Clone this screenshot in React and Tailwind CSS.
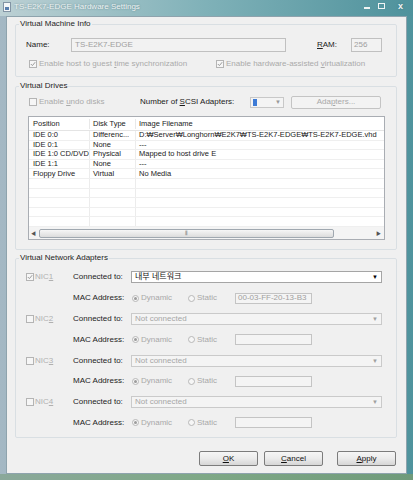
import React from 'react';

const rows = [
  ['IDE 0:0', 'Differenc...', 'D:₩Server₩Longhorn₩E2K7₩TS-E2K7-EDGE₩TS-E2K7-EDGE.vhd'],
  ['IDE 0:1', 'None', '---'],
  ['IDE 1:0 CD/DVD', 'Physical', 'Mapped to host drive E'],
  ['IDE 1:1', 'None', '---'],
  ['Floppy Drive', 'Virtual', 'No Media'],
  ['', '', ''],
  ['', '', ''],
  ['', '', ''],
  ['', '', ''],
  ['', '', ''],
];

function Check({ checked }) {
  return (
    <span className="w-[8px] h-[8px] border border-[#b4b4b4] bg-[#f6f6f6] flex items-center justify-center shrink-0">
      {checked && (
        <svg width="6" height="6" viewBox="0 0 6 6">
          <path d="M0.8 3 L2.4 4.6 L5.2 1.2" fill="none" stroke="#9a9a9a" strokeWidth="1" />
        </svg>
      )}
    </span>
  );
}

function Radio({ on }) {
  return (
    <span className="w-[7px] h-[7px] rounded-full border border-[#b8b8b8] bg-[#f6f6f6] flex items-center justify-center shrink-0">
      {on && <span className="w-[3px] h-[3px] rounded-full bg-[#9c9c9c]" />}
    </span>
  );
}

function Select({ active, text }) {
  return (
    <div
      className={`w-[251px] h-[12px] flex items-center justify-between px-[3px] border ${
        active ? 'bg-white border-[#a5a5a5] text-[#111]' : 'bg-[#f4f4f4] border-[#cacaca] text-[#a6a6a6]'
      }`}
    >
      <span>{text}</span>
      <span className={`text-[6px] ${active ? 'text-black' : 'text-[#a0a0a0]'}`}>▼</span>
    </div>
  );
}

function NicRows({ n, active, connected, mac, checked }) {
  return (
    <>
      <div className="h-[20.8px] flex items-center pl-[10px]">
        <div className="w-[47px] flex items-center gap-[1px] text-[#b0b0b0]">
          <Check checked={checked} />
          <span>
            NIC<span className="underline">{n}</span>
          </span>
        </div>
        <span className="w-[58px] text-[#222]">Connected to:</span>
        <Select active={active} text={connected} />
      </div>
      <div className="h-[20.8px] flex items-center pl-[57px]">
        <span className="w-[59px] text-[#222]">MAC Address:</span>
        <div className="w-[56px] flex items-center gap-[2px] text-[#a8a8a8]">
          <Radio on />
          <span>Dynamic</span>
        </div>
        <div className="w-[47px] flex items-center gap-[2px] text-[#a8a8a8]">
          <Radio />
          <span>Static</span>
        </div>
        <div className="w-[77px] h-[11px] border border-[#c4c4c4] bg-[#f4f4f4] text-[#a0a0a0] pl-[2px] flex items-center">
          {mac}
        </div>
      </div>
    </>
  );
}

function Group({ title, h, children }) {
  return (
    <fieldset className={`border border-[#d9dfe3] rounded-[2px] w-[382px] ${h}`}>
      <legend className="ml-[3px] px-[1px] leading-[10px] text-[#1e1e1e]">{title}</legend>
      {children}
    </fieldset>
  );
}

function Button({ first, rest }) {
  return (
    <button className="w-[59px] h-[15px] border border-[#7c7c7c] rounded-[2px] bg-gradient-to-b from-[#f6f6f6] via-[#ebebeb] to-[#d6d6d6] text-[#111] flex items-center justify-center">
      <span>
        <span className="underline">{first}</span>
        {rest}
      </span>
    </button>
  );
}

export default function App() {
  return (
    <div className="w-[413px] h-[480px] flex flex-col overflow-hidden bg-gradient-to-r from-[#a4b8c4] via-[#79aab2] to-[#4f939d] font-['Liberation_Sans','Noto_Sans_CJK_KR',sans-serif] text-[8px] leading-[10px]">
      {/* title bar */}
      <div className="h-[16px] flex items-start justify-between bg-gradient-to-r from-[#bcd0d4] via-[#7fb1b8] to-[#4e929c]">
        <div className="flex items-center gap-[3px] pl-[3px] pt-[2px]">
          <svg width="8" height="10" viewBox="0 0 8 10">
            <rect x="0.5" y="0.5" width="7" height="9" fill="#f4f6f8" stroke="#8294a4" />
            <rect x="2" y="5" width="4" height="3" fill="#5a7fae" />
          </svg>
          <span className="text-[#eef4f4] [text-shadow:0_0_2px_#5f8188]">TS-E2K7-EDGE Hardware Settings</span>
        </div>
        <div className="flex items-center gap-[8px] pr-[10px] pt-[1px] text-[#f2f6f6] [text-shadow:0_0_2px_#3f6f76]">
          <span className="w-[6px] h-[2px] bg-[#f0f4f4] mt-[4px]" />
          <span className="w-[7px] h-[6px] border-[1.5px] border-[#f0f4f4]" />
          <span className="text-[9px] font-bold ml-[5px]">x</span>
        </div>
      </div>

      {/* client */}
      <div className="flex-1 ml-[6px] mr-[6px] border border-[#8ea3ad] bg-[#f0f0f0] flex flex-col pl-[8px] pt-[2px]">
        <Group title="Virtual Machine Info" h="h-[58px]">
          <div className="h-[14px] mt-[9px] flex items-center pl-[10px]">
            <span className="w-[45px] text-[#222]">Name:</span>
            <div className="w-[215px] h-[14px] border border-[#c0c0c0] bg-[#f2f2f2] text-[#a0a0a0] pl-[3px] flex items-center">
              TS-E2K7-EDGE
            </div>
            <span className="ml-[31px] w-[34px] text-[#222]">
              <span className="underline">R</span>AM:
            </span>
            <div className="w-[31px] h-[14px] border border-[#c0c0c0] bg-[#f2f2f2] text-[#a0a0a0] pl-[2px] flex items-center">
              256
            </div>
          </div>
          <div className="h-[10px] mt-[7px] flex items-center pl-[13px] text-[#aaa]">
            <div className="w-[187px] flex items-center gap-[2px]">
              <Check checked />
              <span>
                Enable host to guest <span className="underline">t</span>ime synchronization
              </span>
            </div>
            <div className="flex items-center gap-[2px]">
              <Check checked />
              <span>
                Enable hardware-assisted <span className="underline">v</span>irtualization
              </span>
            </div>
          </div>
        </Group>

        <div className="mt-[4px]">
          <Group title="Virtual Drives" h="h-[169px]">
            <div className="h-[14px] mt-[4px] flex items-center pl-[13px]">
              <div className="w-[111px] flex items-center gap-[2px] text-[#aaa]">
                <Check />
                <span>
                  Enable <span className="underline">u</span>ndo disks
                </span>
              </div>
              <span className="w-[110px] text-[#1a1a1a]">
                Number of <span className="underline">S</span>CSI Adapters:
              </span>
              <div className="w-[34px] h-[11px] border border-[#c8c8c8] bg-[#f4f4f4] flex items-center justify-between px-[2px]">
                <span className="w-[4px] h-[7px] bg-[#3d7bd6]" />
                <span className="text-[6px] text-[#999]">▼</span>
              </div>
              <button className="ml-[7px] w-[90px] h-[13px] border border-[#c4c4c4] rounded-[2px] bg-[#f3f3f3] text-[#a8a8a8]">
                Ada<span className="underline">p</span>ters...
              </button>
            </div>

            <div className="ml-[12px] mt-[7px] w-[357px] h-[124px] border border-[#a9adb3] bg-white flex flex-col text-[7.5px]">
              <div className="h-[14px] flex items-center border-b border-[#e4e4e4] text-[#222]">
                <span className="w-[60px] pl-[4px]">Position</span>
                <span className="w-[46px] pl-[3px] border-l border-[#e8e8e8]">Disk Type</span>
                <span className="flex-1 pl-[3px] border-l border-[#e8e8e8]">Image Filename</span>
              </div>
              <div className="flex-1 flex flex-col">
                {rows.map((r, i) => (
                  <div key={i} className="h-[9.6px] flex items-center border-b border-[#efefef] text-[#222] whitespace-nowrap overflow-hidden">
                    <span className="w-[60px] pl-[4px] h-full flex items-center overflow-hidden">{r[0]}</span>
                    <span className="w-[46px] pl-[3px] h-full flex items-center border-l border-[#ececec] overflow-hidden">{r[1]}</span>
                    <span className="flex-1 pl-[3px] h-full flex items-center border-l border-[#ececec] overflow-hidden">{r[2]}</span>
                  </div>
                ))}
              </div>
              <div className="h-[12px] flex items-center bg-[#f4f4f4] px-[2px] text-[#555]">
                <span className="text-[5px] w-[8px]">◀</span>
                <div className="w-[295px] h-[9px] rounded-[2px] border border-[#a0a8b0] bg-gradient-to-b from-[#f6f6f6] to-[#dcdcdc] flex items-center justify-center text-[#777] text-[6px]">
                  ⦀
                </div>
                <span className="flex-1" />
                <span className="text-[5px] w-[6px]">▶</span>
              </div>
            </div>
          </Group>
        </div>

        <div className="mt-[3px]">
          <Group title="Virtual Network Adapters" h="h-[185px]">
            <div className="mt-[4px]">
              <NicRows n="1" active checked connected="내부 네트워크" mac="00-03-FF-20-13-B3" />
              <NicRows n="2" connected="Not connected" mac="" />
              <NicRows n="3" connected="Not connected" mac="" />
              <NicRows n="4" connected="Not connected" mac="" />
            </div>
          </Group>
        </div>

        <div className="mt-[13px] flex items-center pl-[184px]">
          <Button first="O" rest="K" />
          <span className="w-[6px]" />
          <Button first="C" rest="ancel" />
          <span className="w-[14px]" />
          <Button first="A" rest="pply" />
        </div>
      </div>
      <div className="h-[6px] bg-gradient-to-r from-[#8aa89a] via-[#7ea886] to-[#6f9a7a]" />
    </div>
  );
}
